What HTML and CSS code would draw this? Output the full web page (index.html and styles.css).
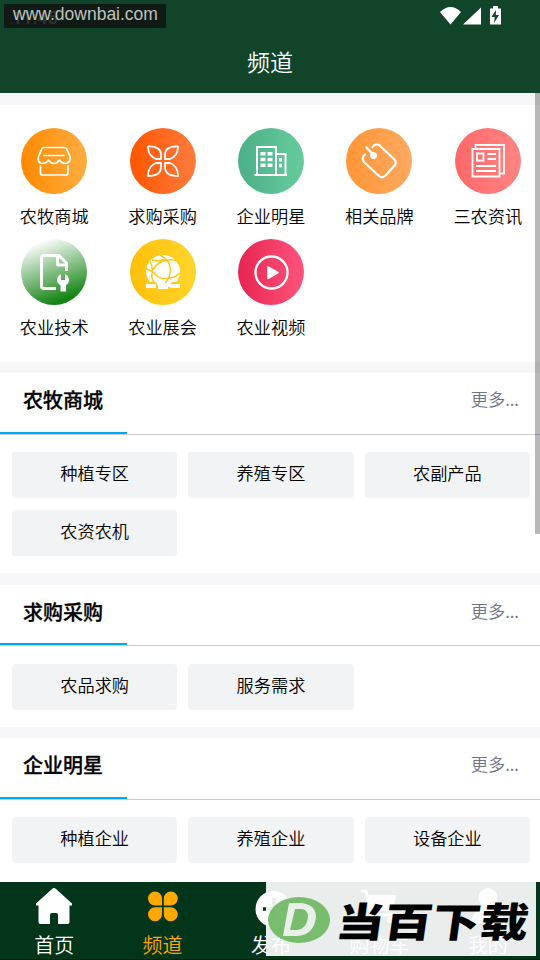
FILE: index.html
```html
<!DOCTYPE html>
<html lang="zh-CN">
<head>
<meta charset="utf-8">
<title>频道</title>
<link rel="stylesheet" href="styles.css">
</head>
<body>
<div class="app">
  <header class="header">
    <div class="status">
      <span class="clock">11:45</span>
      <svg class="status-icons" width="62" height="20" viewBox="0 0 62 20" fill="#fff"><path d="M0 6Q10.500-4 21 6L10.500 18.500Z"/><path d="M23 18.500 41 1.500V18.500Z"/><path d="M50 2.500h3V0h5v2.500h3V18.500H50Z"/><path d="M56 4 51.500 11h3.200L54 17l5-8h-3.200Z" fill="#11452a"/></svg>
    </div>
    <h1 class="title">频道</h1>
  </header>
  <main class="content">
    <section class="channels">
      <div class="channel"><svg class="disc mall" viewBox="0 0 66 66"><g fill="none" stroke="#fff" stroke-width="1.700" stroke-linecap="round" stroke-linejoin="round"><path d="M23 19.500H43Q45 19.500 46 21.500L49 28.500Q50 34.500 45 35.500Q41 35.500 38.500 32Q36 35.500 33 35.500Q30 35.500 27.500 32Q25 35.500 21 35.500Q16 34.500 17.500 28.500L20.500 21.500Q21 19.500 23 19.500Z"/><path d="M23 27.500H43M19.500 38V45Q19.500 47 21.500 47H45Q47 47 47 45V38"/></g></svg><span>农牧商城</span></div>
      <div class="channel"><svg class="disc buy" viewBox="0 0 66 66"><path d="M31 31H26Q18 28 18 18.500Q31 18 31 27ZM35 31H40Q48 28 48 18.500Q35 18 35 27ZM31 35H26Q18 38 18 48Q31 48 31 39ZM35 35H40Q48 38 48 48Q35 48 35 39Z" fill="none" stroke="#fff" stroke-width="1.800" stroke-linejoin="round"/></svg><span>求购采购</span></div>
      <div class="channel"><svg class="disc star" viewBox="0 0 66 66"><g fill="none" stroke="#fff" stroke-width="2"><path d="M16.500 47H49M19 47V19H38V47M38 26H47.500V47"/></g><path fill="#fff" d="M22.500 24h5v3.500h-5zm7 0h5v3.500h-5zm-7 5.700h5v3.500h-5zm7 0h5v3.500h-5zm-7 5.700h5v3.500h-5zm7 0h5v3.500h-5zM41 30h3v3.500h-3zm0 5.700h3v3.500h-3z"/></svg><span>企业明星</span></div>
      <div class="channel"><svg class="disc brand" viewBox="0 0 66 66"><path d="M26.500 19Q29 15 33 17L48 31Q51 34 49 37L39 48Q36 50.500 33 48L18 34Q15 30 19 26.500M20.500 19.500 27 26.500" fill="none" stroke="#fff" stroke-width="2.200" stroke-linecap="round"/><circle cx="27.500" cy="27.500" r="3.500" fill="#fff"/></svg><span>相关品牌</span></div>
      <div class="channel"><svg class="disc news" viewBox="0 0 66 66"><g fill="none" stroke="#fff" stroke-width="1.800"><path d="M17.500 21H44.500V48.500H17.500ZM20.500 21V17H49V45.500H44.500M22 25.500h6.500v7H22ZM32.500 26H41M32.500 31H41M21 38H41M21 43H41"/></g></svg><span>三农资讯</span></div>
      <div class="channel"><svg class="disc tech" viewBox="0 0 66 66"><path d="M35 49.500H23Q20.500 49.500 20.500 47V19Q20.500 16.500 23 16.500H38L45.500 24V32" fill="none" stroke="#fff" stroke-width="3" stroke-linejoin="round"/><path d="M36.500 17V26H45.500" fill="none" stroke="#fff" stroke-width="2.800" stroke-linejoin="round"/><path d="M40 35V41H44V35Q48 37 48 41Q48 44.500 45 46V52.500H39.500V46Q36 44.500 36 41Q36 37 40 35Z" fill="#fff"/></svg><span>农业技术</span></div>
      <div class="channel"><svg class="disc expo" viewBox="0 0 66 66"><ellipse cx="33" cy="32.500" rx="17" ry="16.500" fill="#fff"/><path d="M16 43H26L28 45.500V50H40V45.500L42 43H50V53H16Z" fill="#ffc91b"/><path d="M24 41H42L38 46V50H28V46ZM16 45h10v4H16zM40 45h10v4H40z" fill="#fff"/><g fill="none" stroke="#ffc615" stroke-width="1.400"><path d="M20 22Q23 28 22 34Q21 40 25 45M22 32Q28 22 38 21Q45 20 50 23M30 16Q42 22 40 34Q39 40 35 44M16 30Q22 31 27 37Q32 41 40 39Q46 38 50 34M22 21Q30 23 36 20"/></g></svg><span>农业展会</span></div>
      <div class="channel"><svg class="disc video" viewBox="0 0 66 66"><circle cx="33.500" cy="33.500" r="16" fill="none" stroke="#fff" stroke-width="2.300"/><path d="M30 28 40 33.500 30 39.500Z" fill="#fff" stroke="#fff" stroke-width="1.500" stroke-linejoin="round"/></svg><span>农业视频</span></div>
    </section>
    <section class="block">
      <div class="block-head"><h2>农牧商城</h2><span class="more">更多...</span></div>
      <div class="tags"><span>种植专区</span><span>养殖专区</span><span>农副产品</span><span>农资农机</span></div>
    </section>
    <section class="block">
      <div class="block-head"><h2>求购采购</h2><span class="more">更多...</span></div>
      <div class="tags"><span>农品求购</span><span>服务需求</span></div>
    </section>
    <section class="block last">
      <div class="block-head"><h2>企业明星</h2><span class="more">更多...</span></div>
      <div class="tags"><span>种植企业</span><span>养殖企业</span><span>设备企业</span></div>
    </section>
    <div class="scrollbar"></div>
  </main>
  <nav class="nav">
    <div class="nav-item"><svg width="40" height="40" viewBox="0 0 40 40" fill="#fff"><path d="M20 0Q21 0 22 1L38 15.500V17.500H35.500V34Q35.500 36 33.500 36H24V27Q24 25 22 25H18Q16 25 16 27V36H6.500Q4.500 36 4.500 34V17.500H2V15.500L18 1Q19 0 20 0Z"/></svg><span>首页</span></div>
    <div class="nav-item active"><svg width="40" height="40" viewBox="0 0 40 40" fill="#ffa800"><path d="M19 17.500H12A7 7 0 1 1 19 10.500ZM20.800 17.500V10.500A7 7 0 1 1 27.800 17.500ZM19 19.300V26A7 7 0 1 1 12 19.300ZM20.800 19.300H27.800A7 7 0 1 1 20.800 26Z"/></svg><span>频道</span></div>
    <div class="nav-item"><svg width="40" height="40" viewBox="0 0 40 40"><circle cx="22.500" cy="21" r="18" fill="#fff"/><path d="M12 21H34M23 10V32" stroke="#03351b" stroke-width="3.500"/></svg><span>发布</span></div>
    <div class="nav-item"><svg width="40" height="40" viewBox="0 0 40 40"><path d="M2 3H7L12 27H33" fill="none" stroke="#fff" stroke-width="3"/><path d="M8 7H37L34 23H12Z" fill="#fff"/><circle cx="15" cy="32" r="3" fill="#fff"/><circle cx="31" cy="32" r="3" fill="#fff"/></svg><span>购物车</span></div>
    <div class="nav-item"><svg width="40" height="40" viewBox="0 0 40 40" fill="#fff"><circle cx="20" cy="9.500" r="9.500"/><path d="M3 36Q3 26 13 19H27Q37 26 37 36Z"/></svg><span>我的</span></div>
  </nav>
  <div class="url-mark">www.downbai.com</div>
  <div class="brand-mark">
    <svg class="brand-logo" width="62" height="46" viewBox="0 0 62 46"><ellipse cx="31" cy="23" rx="31" ry="23" fill="#70b964"/><path fill-rule="evenodd" fill="#e9f1ea" d="M21 6H34Q48 8 48 20Q46 38 29 39H15ZM27 12 22 33H29Q39 32 40 20Q40 12 33 12Z"/></svg>
    <span class="brand-text">当百下载</span>
  </div>
</div>
</body>
</html>
```
FILE: styles.css
```css
* { box-sizing: border-box; }
body { margin: 0; font-family: "Noto Sans CJK SC", sans-serif; font-weight: 350; color: #000; }
.app { position: relative; width: 540px; height: 960px; overflow: hidden; display: flex; flex-direction: column; background: #f7f7f9; }
.header { height: 93px; flex: none; background: #11452a; color: #fff; }
.status { height: 31px; padding: 6px 38px 0 12px; display: flex; justify-content: space-between; }
.clock { font: 500 18px/24px Roboto, sans-serif; }
.title { margin: 0; height: 62px; line-height: 60px; text-align: center; font-size: 23px; font-weight: 350; }
.content { position: relative; flex: 1; min-height: 0; overflow: hidden; padding-top: 12px; display: flex; flex-direction: column; }
.channels { flex: none; width: 541px; height: 257px; margin-bottom: 11px; padding-top: 23px; background: #fff; display: grid; grid-template-columns: repeat(5, 108.4px); grid-auto-rows: 111.4px; }
.channel { display: flex; flex-direction: column; align-items: center; font-size: 17.2px; line-height: 24px; gap: 10px; }
.disc { width: 66px; height: 66px; border-radius: 50%; flex: none; }
.mall { background: linear-gradient(90deg, #ff8900, #ffad42); }
.buy { background: linear-gradient(90deg, #ff5500, #ff7c3e); }
.star { background: linear-gradient(90deg, #4caf87, #66cc9c); }
.brand { background: linear-gradient(90deg, #ff9636, #ffa860); }
.news { background: linear-gradient(90deg, #ff6868, #ff8584); }
.tech { background: linear-gradient(160deg, #fff 10%, #138313 85%); }
.expo { background: linear-gradient(90deg, #ffbf09, #ffd52c); }
.video { background: linear-gradient(90deg, #e52550, #ff547d); }
.block { flex: none; margin-bottom: 11.5px; padding-bottom: 17px; background: #fff; }
.last { padding-bottom: 24px; }
.block-head { height: 61.5px; padding: 0 21px 0 23px; display: flex; justify-content: space-between; border-bottom: 1px solid #c8c9d4; background: linear-gradient(#00aaf0, #00aaf0) 0 100% / 127px 2px no-repeat; }
.block-head h2 { margin: 0; font-size: 20px; line-height: 54px; font-weight: 500; -webkit-text-stroke: .3px #000; }
.more { font-size: 17.2px; line-height: 52px; color: #707386; }
.tags { padding: 17.5px 10px 0 12px; display: grid; grid-template-columns: repeat(3, 1fr); gap: 12px 11px; }
.tags span { height: 46px; line-height: 41px; border-radius: 4px; background: #f2f3f5; text-align: center; font-size: 17.2px; }
.scrollbar { position: absolute; top: 0; right: 0; width: 5px; height: 441px; background: rgba(0,0,0,.28); }
.nav { flex: none; height: 78px; padding-top: 6px; width: 542px; display: grid; grid-template-columns: repeat(5, 1fr); background: #03351b; color: #fff; border-bottom: 1px solid #0b1c17; }
.nav-item { display: flex; flex-direction: column; align-items: center; font-size: 20px; line-height: 30px; font-weight: 350; }
.nav-item svg { flex: none; margin-bottom: 2px; }
.active { color: #ffa800; }
.url-mark { position: absolute; left: 4px; top: 4px; width: 162px; height: 24px; padding-left: 9px; background: rgba(17,20,18,.87); color: #bcc3be; font: 400 17.5px/20px "Liberation Sans", sans-serif; white-space: nowrap; }
.brand-mark { position: absolute; left: 266px; top: 882px; width: 270px; height: 74px; padding-left: 2px; display: flex; align-items: center; background: rgba(253,253,254,.92); }
.brand-logo { flex: none; margin-top: 2px; opacity: .93; }
.brand-text { margin-left: 7px; font-size: 48px; line-height: 70px; font-weight: 900; white-space: nowrap; transform: skewX(-8deg) scaleY(.84); }
```
